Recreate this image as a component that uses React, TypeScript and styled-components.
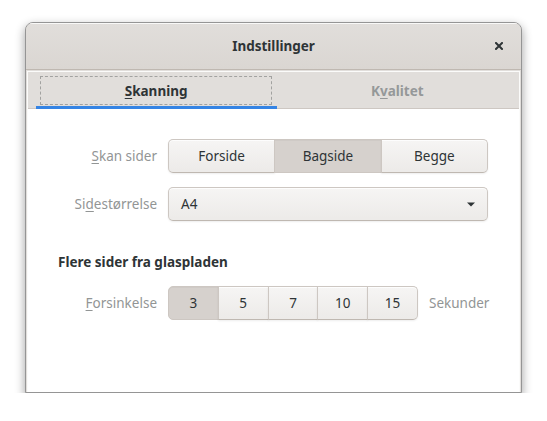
import React, { useState } from 'react';
import styled, { createGlobalStyle, css } from 'styled-components';

const GlobalStyle = createGlobalStyle`
  html, body {
    margin: 0;
    padding: 0;
    background: #ffffff;
  }
  body {
    font-family: "Noto Sans", "DejaVu Sans", sans-serif;
    font-size: 13.5px;
    color: #2e3436;
  }
`;

const Window = styled.div`
  box-sizing: border-box;
  margin: 22px 0 0 25px;
  width: 497px;
  height: 371px;
  display: flex;
  flex-direction: column;
  border: 1px solid #959595;
  border-radius: 8px 8px 0 0;
  background: #e1dedb;
  box-shadow: 0 4px 10px 1px rgba(0, 0, 0, 0.32);
  overflow: hidden;
`;

const TitleBar = styled.div`
  height: 46px;
  flex: none;
  display: grid;
  grid-template-columns: 1fr auto 1fr;
  align-items: center;
  background: linear-gradient(to top, #dad6d2, #e1dedb);
  border-bottom: 1px solid #bfb8b1;
  box-shadow: inset 0 1px rgba(255, 255, 255, 0.8);
`;

const Title = styled.div`
  grid-column: 2;
  font-weight: 700;
  font-size: 13.5px;
  color: #2e3436;
`;

const CloseButton = styled.div`
  grid-column: 3;
  justify-self: end;
  width: 32px;
  height: 32px;
  margin-right: 6px;
  display: flex;
  align-items: center;
  justify-content: center;
`;

const Body = styled.div`
  flex: 1;
  display: flex;
  padding: 1px 1px 0 1px;
  background: #e1dedb;
`;

const Notebook = styled.div`
  flex: 1;
  display: flex;
  flex-direction: column;
  border: 1px solid #fbfbfa;
  border-bottom: none;
`;

const TabStrip = styled.div`
  height: 36px;
  flex: none;
  display: flex;
  padding: 0 1px 0 8px;
  background: #e1dedb;
  border-bottom: 1px solid #cdc7c2;
`;

const Tab = styled.div<{ $active?: boolean }>`
  flex: 1;
  display: flex;
  box-sizing: border-box;
  margin-bottom: -1px;
  border-bottom: 3px solid transparent;
  font-weight: 700;
  color: #959899;
  ${(p) =>
    p.$active &&
    css`
      border-bottom-color: #3584e4;
      color: #2e3436;
    `}
`;

const TabLabel = styled.div<{ $focus?: boolean }>`
  flex: 1;
  display: flex;
  align-items: center;
  justify-content: center;
  margin: 4px 5px 1px 4px;
  border: 1px dashed ${(p) => (p.$focus ? 'rgba(46, 52, 54, 0.35)' : 'transparent')};
`;

const Page = styled.div`
  flex: 1;
  background: #ffffff;
  padding: 30px 30px 0 30px;
  display: flex;
  flex-direction: column;
`;

const Row = styled.div<{ $gap?: number }>`
  display: flex;
  align-items: center;
  gap: 11px;
  margin-top: ${(p) => p.$gap ?? 0}px;
`;

const FieldLabel = styled.div`
  width: 99px;
  text-align: right;
  color: #929595;
  white-space: nowrap;
`;

const Heading = styled.div`
  margin-top: 31px;
  line-height: 20px;
  font-weight: 700;
  color: #2e3436;
`;

const Mnemonic = styled.span`
  text-decoration: underline;
  text-underline-offset: 2px;
  text-decoration-thickness: 1px;
`;

const ButtonGroup = styled.div<{ $width: number }>`
  display: flex;
  width: ${(p) => p.$width}px;
  height: 34px;
`;

const buttonBase = css`
  box-sizing: border-box;
  border: 1px solid #cdc7c2;
  border-bottom-color: #bfb8b1;
  background: linear-gradient(to top, #edebe9 2px, #f6f5f4);
  box-shadow: inset 0 1px rgba(255, 255, 255, 0.8), 0 1px 2px rgba(0, 0, 0, 0.07);
  color: #2e3436;
  font-family: inherit;
  font-size: 13.5px;
`;

const SegButton = styled.div<{ $checked?: boolean }>`
  ${buttonBase}
  flex: 1;
  display: flex;
  align-items: center;
  justify-content: center;
  margin-left: -1px;
  &:first-child {
    margin-left: 0;
    border-radius: 5px 0 0 5px;
  }
  &:last-child {
    border-radius: 0 5px 5px 0;
  }
  ${(p) =>
    p.$checked &&
    css`
      background: #d6d1cd;
      border-color: #cdc7c2;
      box-shadow: inset 0 1px rgba(0, 0, 0, 0.03);
    `}
`;

const Combo = styled.div`
  ${buttonBase}
  width: 320px;
  height: 34px;
  border-radius: 5px;
  display: flex;
  align-items: center;
  justify-content: space-between;
  padding: 0 12px 0 12px;
`;

const Unit = styled.div`
  color: #929595;
`;

const CloseIcon = () => (
  <svg width="8" height="8" viewBox="0 0 8 8">
    <path d="M1 1 L7 7 M7 1 L1 7" stroke="#2e3436" strokeWidth="2" strokeLinecap="square" />
  </svg>
);

const ArrowDown = () => (
  <svg width="8" height="5" viewBox="0 0 8 5">
    <path d="M0 0.5 H8 L4 4.5 Z" fill="#2e3436" />
  </svg>
);

const sides = ['Forside', 'Bagside', 'Begge'];
const delays = ['3', '5', '7', '10', '15'];

export default function App() {
  const [side, setSide] = useState('Bagside');
  const [delay, setDelay] = useState('3');

  return (
    <>
      <GlobalStyle />
      <Window>
        <TitleBar>
          <Title>Indstillinger</Title>
          <CloseButton>
            <CloseIcon />
          </CloseButton>
        </TitleBar>
        <Body>
          <Notebook>
            <TabStrip>
              <Tab $active>
                <TabLabel $focus>
                  <span>
                    <Mnemonic>S</Mnemonic>kanning
                  </span>
                </TabLabel>
              </Tab>
              <Tab>
                <TabLabel>
                  <span>
                    K<Mnemonic>v</Mnemonic>alitet
                  </span>
                </TabLabel>
              </Tab>
            </TabStrip>
            <Page>
              <Row>
                <FieldLabel>
                  <Mnemonic>S</Mnemonic>kan sider
                </FieldLabel>
                <ButtonGroup $width={320}>
                  {sides.map((s) => (
                    <SegButton key={s} $checked={side === s} onClick={() => setSide(s)}>
                      {s}
                    </SegButton>
                  ))}
                </ButtonGroup>
              </Row>
              <Row $gap={14}>
                <FieldLabel>
                  Si<Mnemonic>d</Mnemonic>estørrelse
                </FieldLabel>
                <Combo>
                  <span>A4</span>
                  <ArrowDown />
                </Combo>
              </Row>
              <Heading>Flere sider fra glaspladen</Heading>
              <Row $gap={14}>
                <FieldLabel>
                  <Mnemonic>F</Mnemonic>orsinkelse
                </FieldLabel>
                <ButtonGroup $width={250}>
                  {delays.map((d) => (
                    <SegButton key={d} $checked={delay === d} onClick={() => setDelay(d)}>
                      {d}
                    </SegButton>
                  ))}
                </ButtonGroup>
                <Unit>Sekunder</Unit>
              </Row>
            </Page>
          </Notebook>
        </Body>
      </Window>
    </>
  );
}
